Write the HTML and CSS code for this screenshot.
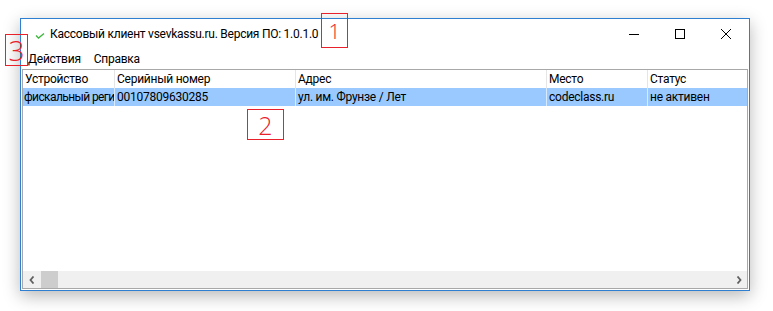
FILE: index.html
```html
<!DOCTYPE html>
<html lang="ru">
<head>
  <meta charset="UTF-8" />
  <title>Кассовый клиент</title>
  <link rel="stylesheet" href="styles.css">
</head>
<body>
  <div class="window">
    <div class="titlebar">
      <svg class="app-icon" width="10" height="6" viewBox="0 0 10 6">
        <polyline points="1,2.5 3.5,5 9,0.5" fill="none" stroke="#3cb83c" stroke-width="1.3" />
      </svg>
      <span class="title">Кассовый клиент vsevkassu.ru. Версия ПО: 1.0.1.0</span>
      <div class="controls">
        <div class="ctl">
          <svg width="10" height="10" viewBox="0 0 10 10"><line x1="0" y1="5.5" x2="10" y2="5.5" stroke="#000" stroke-width="1" /></svg>
        </div>
        <div class="ctl">
          <svg width="10" height="10" viewBox="0 0 10 10"><rect x="0.5" y="0.5" width="9" height="9" fill="none" stroke="#000" stroke-width="1" /></svg>
        </div>
        <div class="ctl">
          <svg width="10" height="10" viewBox="0 0 10 10"><path d="M0 0 L10 10 M10 0 L0 10" stroke="#000" stroke-width="1" /></svg>
        </div>
      </div>
    </div>

    <div class="menubar">
      <span class="menu-item">Действия</span>
      <span class="menu-item">Справка</span>
    </div>

    <div class="list">
      <div class="row header">
        <div class="cell">Устройство</div>
        <div class="cell">Серийный номер</div>
        <div class="cell">Адрес</div>
        <div class="cell">Место</div>
        <div class="cell">Статус</div>
      </div>
      <div class="row selected">
        <div class="cell tight">фискальный реги</div>
        <div class="cell">00107809630285</div>
        <div class="cell">ул. им. Фрунзе / Лет</div>
        <div class="cell">codeclass.ru</div>
        <div class="cell">не активен</div>
      </div>

      <div class="hscroll">
        <div class="arrow">
          <svg width="6" height="8" viewBox="0 0 6 8"><polyline points="4.5,0.5 1.5,4 4.5,7.5" fill="none" stroke="#606060" stroke-width="1.8" /></svg>
        </div>
        <div class="thumb"></div>
        <div class="track"></div>
        <div class="arrow">
          <svg width="6" height="8" viewBox="0 0 6 8"><polyline points="1.5,0.5 4.5,4 1.5,7.5" fill="none" stroke="#606060" stroke-width="1.8" /></svg>
        </div>
      </div>
    </div>
  </div>

  <!-- пометки -->
  <div class="mark mark-1">1</div>
  <div class="mark mark-2">2</div>
  <div class="mark mark-3">3</div>
</body>
</html>
```

FILE: styles.css
```css
* {
  box-sizing: border-box;
}
body {
  margin: 0;
  width: 773px;
  height: 311px;
  background: #fff;
  font-family: Roboto, "Liberation Sans", sans-serif;
  font-size: 12px;
  letter-spacing: -0.25px;
  color: #000;
  padding: 18px 0 0 20px;
  position: relative;
  overflow: hidden;
}
.window {
  width: 730px;
  height: 273px;
  border: 1px solid #2e7fd2;
  background: #fff;
  box-shadow: 0 5px 16px rgba(0, 0, 0, 0.28);
  display: flex;
  flex-direction: column;
  padding: 0 1px 1px 1px;
}
.titlebar {
  height: 30px;
  display: flex;
  align-items: center;
  margin: 0 -1px;
}
.app-icon {
  margin-left: 14px;
  margin-top: 3px;
}
.title {
  margin-left: 5px;
}
.controls {
  margin-left: auto;
  display: flex;
  height: 100%;
}
.ctl {
  width: 46px;
  height: 30px;
  display: flex;
  align-items: center;
  justify-content: center;
}
.menubar {
  height: 20px;
  display: flex;
  align-items: center;
  margin: 0 -1px;
}
.menu-item {
  padding: 0 7px;
}
.menu-item + .menu-item {
  padding-left: 6px;
}
.list {
  flex: 1;
  border: 1px solid #a8a8a8;
  display: flex;
  flex-direction: column;
}
.row {
  display: grid;
  grid-template-columns: 92px 181px 251px 101px 1fr;
  height: 18px;
}
.cell {
  padding-left: 2px;
  line-height: 18px;
  white-space: nowrap;
  overflow: hidden;
  border-right: 1px solid #e5e5e5;
}
.cell.tight {
  letter-spacing: -0.6px;
  padding-left: 1px;
}
.header .cell:last-child {
  border-right: none;
}
.selected {
  background: #99c9ff;
}
.selected .cell {
  border-right-color: #d8eafd;
}
.selected .cell:last-child {
  border-right: none;
}
.hscroll {
  margin-top: auto;
  height: 17px;
  background: #f0f0f0;
  display: flex;
}
.arrow {
  width: 17px;
  display: flex;
  align-items: center;
  justify-content: center;
}
.thumb {
  width: 17px;
  margin-left: 1px;
  background: #cdcdcd;
}
.track {
  flex: 1;
}
.mark {
  position: absolute;
  border: 1px solid #e8212b;
  color: #e8212b;
  font-family: "Open Sans", "Liberation Sans", sans-serif;
  font-weight: 300;
  letter-spacing: 0;
  display: flex;
  align-items: center;
  justify-content: center;
}
.mark-1 {
  left: 321px;
  top: 13px;
  width: 27px;
  height: 35px;
  font-size: 21px;
}
.mark-2 {
  left: 247px;
  top: 109px;
  width: 37px;
  height: 31px;
  font-size: 25px;
}
.mark-3 {
  left: 5px;
  top: 34px;
  width: 23px;
  height: 32px;
  font-size: 28px;
}
```
